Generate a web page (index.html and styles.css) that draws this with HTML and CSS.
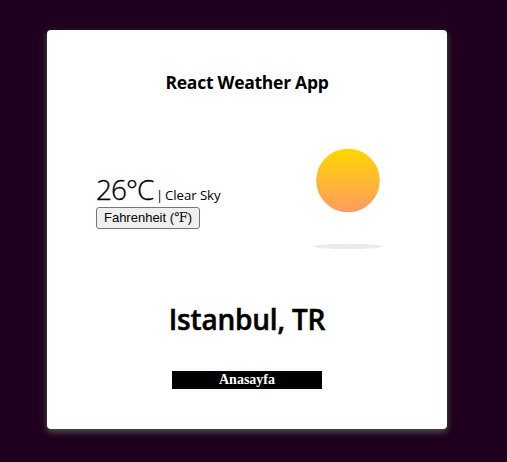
FILE: index.html
```html
<!DOCTYPE html>
<html lang="tr">
<head>
<meta charset="utf-8">
<title>React Weather App</title>
<link rel="stylesheet" href="styles.css">
</head>
<body>
<main class="card">
  <h1 class="title">React Weather App</h1>
  <section class="weather">
    <div class="info">
      <div class="reading"><span class="temp">26°C</span><span class="bar">|</span><span class="sky">Clear Sky</span></div>
      <button class="unit" type="button">Fahrenheit (<span class="degree">℉</span>)</button>
    </div>
    <svg class="sun" width="70" height="102" viewBox="0 0 70 102" aria-hidden="true">
      <defs>
        <linearGradient id="sunFill" x1="0" y1="0" x2="0" y2="1">
          <stop offset="0" stop-color="#ffd700"/>
          <stop offset="1" stop-color="#ff9a62"/>
        </linearGradient>
      </defs>
      <circle cx="35" cy="32.5" r="31.8" fill="url(#sunFill)"/>
      <ellipse cx="35" cy="98.4" rx="34.5" ry="2.7" fill="#ebebeb"/>
    </svg>
  </section>
  <h2 class="city">Istanbul, TR</h2>
  <a class="home">Anasayfa</a>
</main>
</body>
</html>
```
FILE: styles.css
```css
body {
  margin: 0;
  height: 462px;
  overflow: hidden;
  background: #1f001f;
  color: #000;
  font-family: "Segoe UI", "Open Sans", "Noto Sans", sans-serif;
}

.card {
  display: flex;
  flex-direction: column;
  align-items: center;
  box-sizing: border-box;
  width: 400px;
  height: 399px;
  margin: 30px 0 0 47px;
  padding-top: 40px;
  border-radius: 4px;
  background: #fff;
  box-shadow: 0 3px 6px rgba(95, 105, 95, 0.8);
}

.title {
  margin: 0;
  font-size: 17.5px;
  line-height: 24px;
  font-weight: 700;
  letter-spacing: -0.27px;
  white-space: nowrap;
}

.weather {
  display: flex;
  justify-content: space-between;
  box-sizing: border-box;
  width: 100%;
  height: 102px;
  margin-top: 54px;
  padding: 0 64px 0 49px;
}

.info {
  display: flex;
  flex-direction: column;
  align-items: flex-start;
  padding-top: 24px;
}

.reading {
  display: flex;
  align-items: baseline;
  height: 35px;
  line-height: 35px;
  white-space: nowrap;
}

.temp {
  width: 60px;
  font-size: 28px;
  font-weight: 300;
  letter-spacing: -1px;
  -webkit-text-stroke: 0.3px #000;
}

.bar {
  width: 9px;
  font-size: 13px;
}

.sky {
  font-size: 13.3px;
  letter-spacing: -0.1px;
}

.unit {
  width: 104px;
  height: 22px;
  padding: 0;
  border: 1px solid #767676;
  border-radius: 3px;
  background: #efefef;
  color: #000;
  font-family: "Liberation Sans", Arial, sans-serif;
  font-size: 13px;
  line-height: 18px;
  white-space: nowrap;
}

.degree {
  font-family: "Liberation Serif", "DejaVu Serif", serif;
}

.city {
  margin: 50px 0 0;
  font-size: 28px;
  line-height: 38px;
  font-weight: 600;
  letter-spacing: -0.2px;
  -webkit-text-stroke: 0.5px #000;
  white-space: nowrap;
}

.home {
  width: 150px;
  height: 18px;
  margin-top: 33px;
  background: #000;
  color: #fff;
  font: bold 14px/18px "Liberation Serif", "Times New Roman", serif;
  text-align: center;
}
```
